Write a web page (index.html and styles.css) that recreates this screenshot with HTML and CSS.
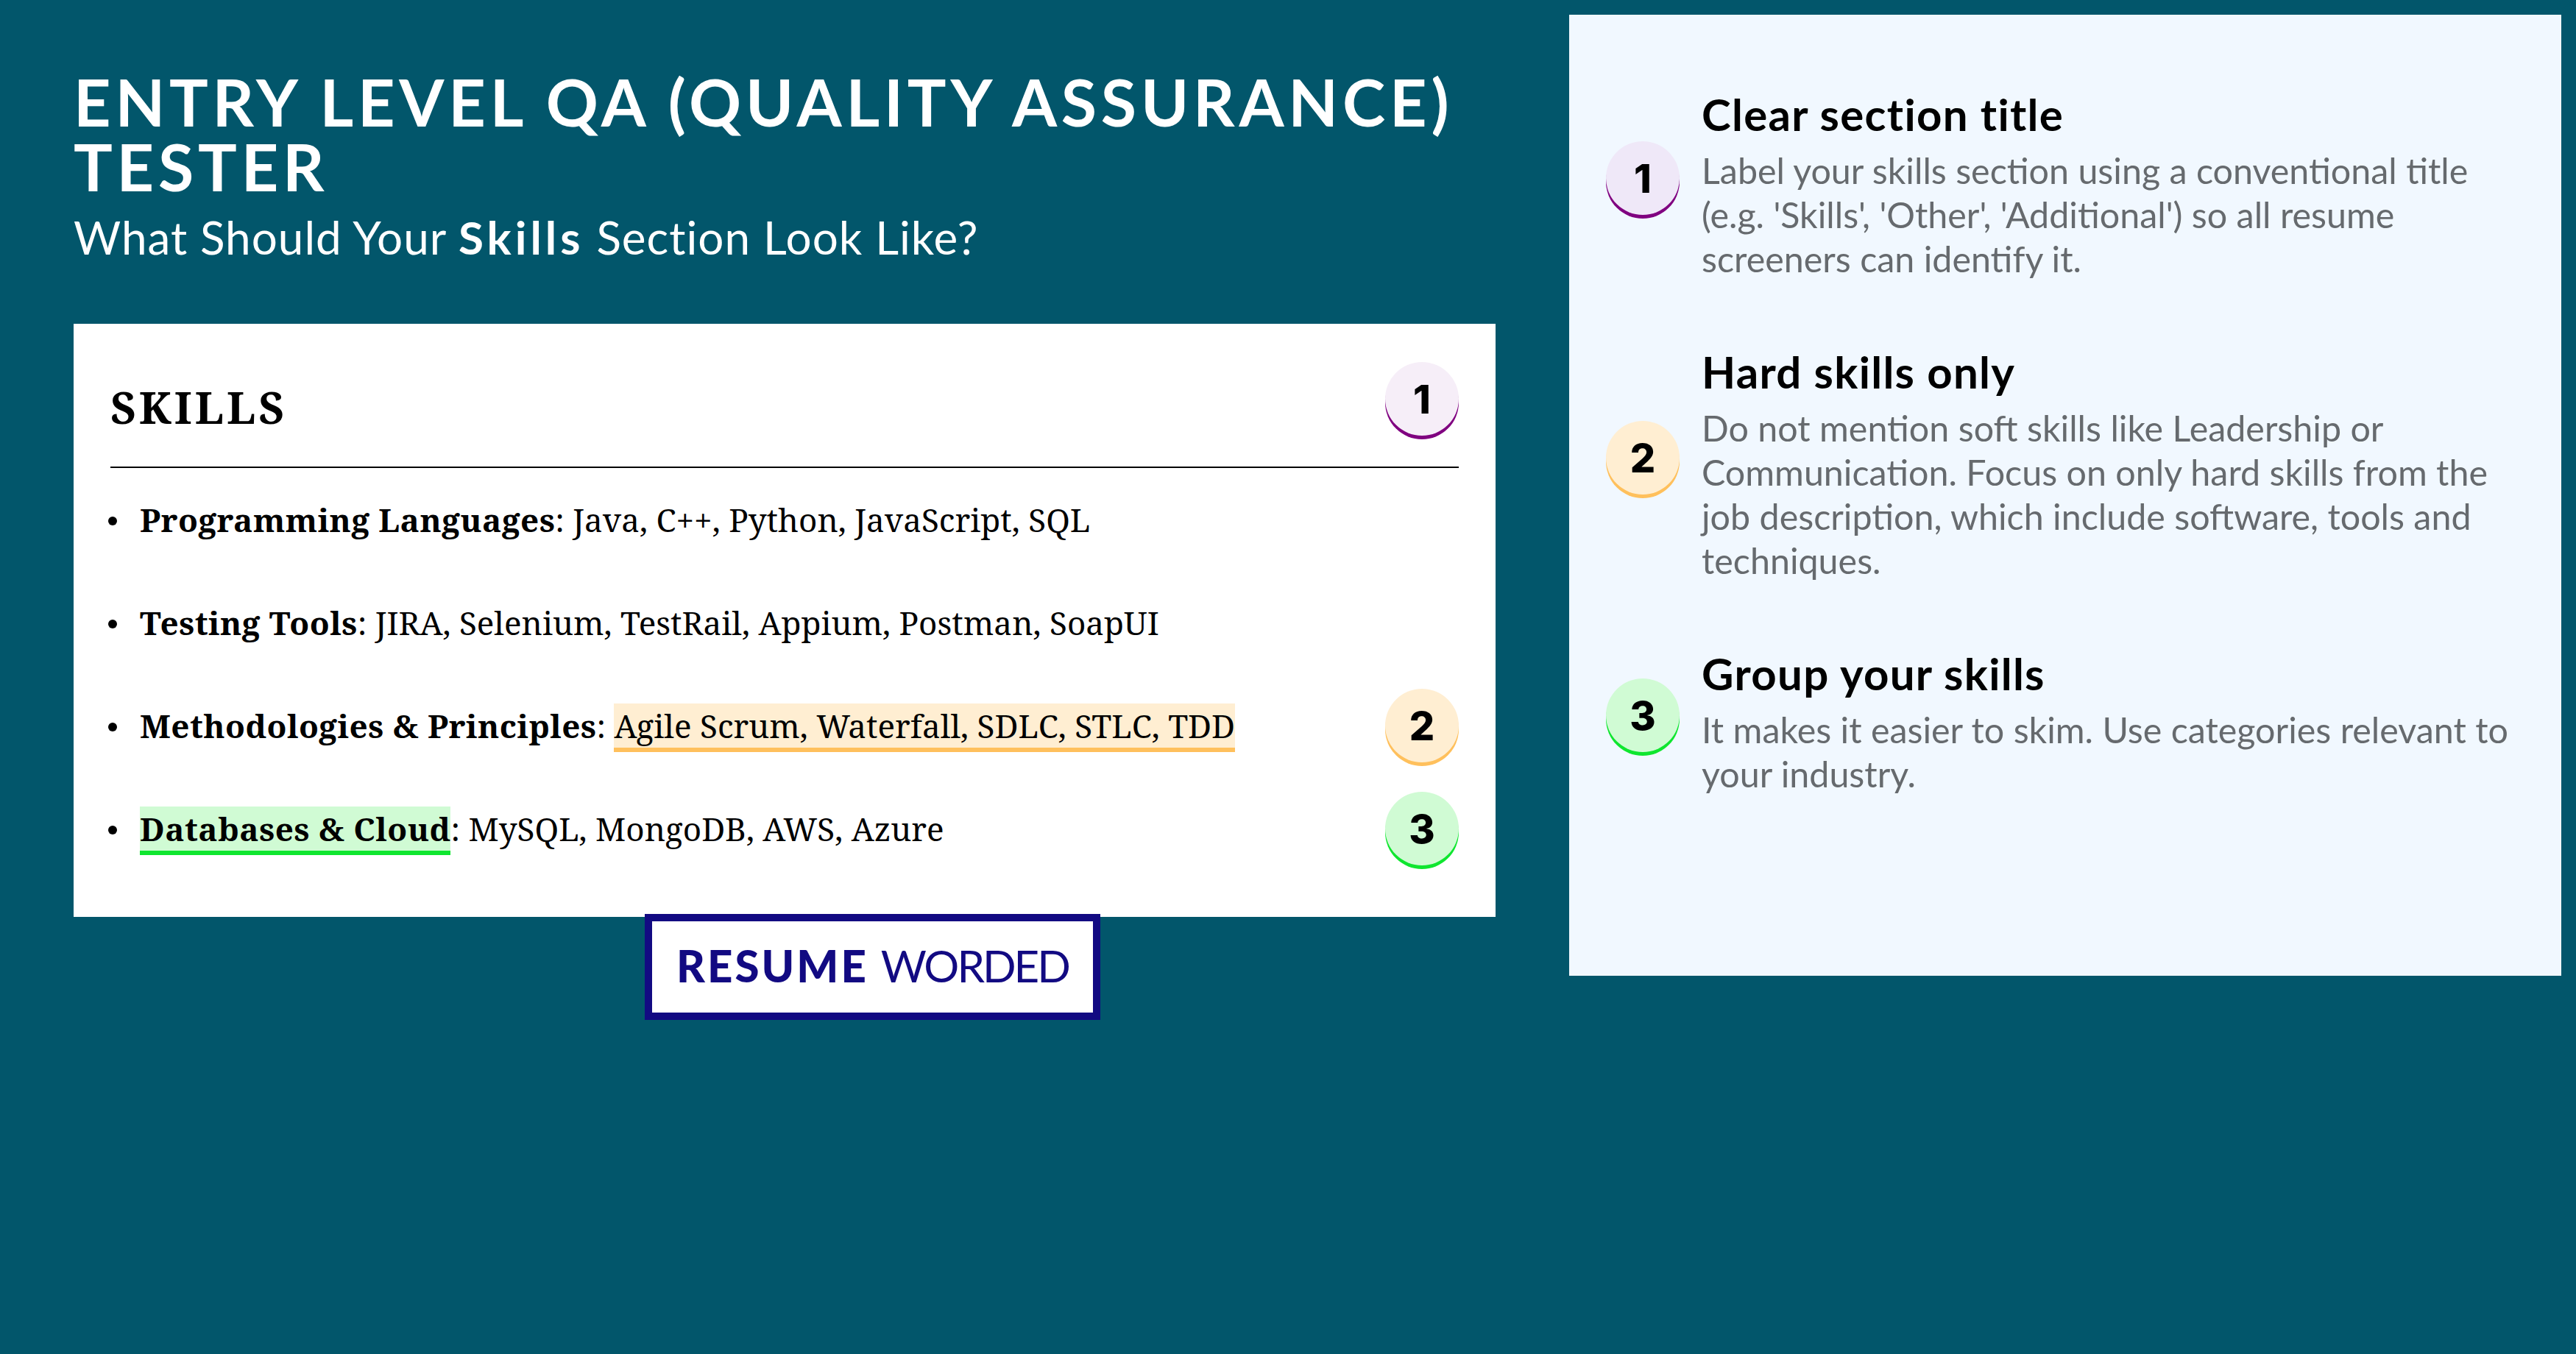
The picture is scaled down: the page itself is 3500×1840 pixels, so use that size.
FILE: index.html
```html
<!DOCTYPE html>
<html lang="en">
<head>
<meta charset="utf-8">
<title>Entry Level QA Tester Skills Section</title>
<link rel="stylesheet" href="styles.css">
</head>
<body>
<main class="page">
  <section class="left">
    <h1 class="title">ENTRY LEVEL QA (QUALITY ASSURANCE) TESTER</h1>
    <p class="subtitle">What Should Your <b>Skills</b> Section Look Like?</p>
    <div class="card">
      <header class="card-head">
        <h2 class="card-title">SKILLS</h2>
        <span class="badge badge-1">1</span>
      </header>
      <ul class="skills">
        <li class="skill"><span class="skill-text"><b>Programming Languages</b>: Java, C++, Python, JavaScript, SQL</span></li>
        <li class="skill"><span class="skill-text"><b>Testing Tools</b>: JIRA, Selenium, TestRail, Appium, Postman, SoapUI</span></li>
        <li class="skill"><span class="skill-text"><b>Methodologies &amp; Principles</b>: <mark class="hl hl-2">Agile Scrum, Waterfall, SDLC, STLC, TDD</mark></span><span class="badge badge-2">2</span></li>
        <li class="skill"><span class="skill-text"><b class="hl hl-3">Databases &amp; Cloud</b>: MySQL, MongoDB, AWS, Azure</span><span class="badge badge-3">3</span></li>
      </ul>
    </div>
    <div class="logo"><b>RESUME</b> <span>WORDED</span></div>
  </section>
  <aside class="panel">
    <article class="tip tip-1">
      <span class="badge badge-1 soft">1</span>
      <div class="tip-body">
        <h3 class="tip-title">Clear section title</h3>
        <p class="tip-text">Label your skills section using a conventional title (e.g. 'Skills', 'Other', 'Additional') so all resume screeners can identify it.</p>
      </div>
    </article>
    <article class="tip tip-2">
      <span class="badge badge-2">2</span>
      <div class="tip-body">
        <h3 class="tip-title">Hard skills only</h3>
        <p class="tip-text">Do not mention soft skills like Leadership or Communication. Focus on only hard skills from the job description, which include software, tools and techniques.</p>
      </div>
    </article>
    <article class="tip tip-3">
      <span class="badge badge-3">3</span>
      <div class="tip-body">
        <h3 class="tip-title">Group your skills</h3>
        <p class="tip-text">It makes it easier to skim. Use categories relevant to your industry.</p>
      </div>
    </article>
  </aside>
</main>
</body>
</html>
```
FILE: styles.css
```css
* { box-sizing: border-box; }
html, body { margin: 0; padding: 0; }
body {
  width: 3500px;
  height: 1840px;
  background: #02566b;
  font-family: "Lato", "Noto Sans", sans-serif;
  overflow: hidden;
}
.page {
  display: flex;
  align-items: flex-start;
  gap: 100px;
  padding-left: 100px;
}
.left { width: 1932px; flex: none; padding-top: 94px; }
.title {
  margin: 0;
  font-size: 88px;
  line-height: 88px;
  font-weight: 700;
  letter-spacing: 5.8px;
  color: #fff;
}
.subtitle {
  margin: 14px 0 0;
  font-size: 62px;
  line-height: 76px;
  letter-spacing: 1px;
  color: #fff;
}
.subtitle b { letter-spacing: 5px; }
.card {
  margin-top: 80px;
  height: 806px;
  padding: 0 50px;
  background: #fff;
  font-family: "Noto Serif", "DejaVu Serif", "Liberation Serif", serif;
  color: #000;
}
.card-head {
  height: 196px;
  display: flex;
  align-items: flex-start;
  justify-content: space-between;
  padding-top: 52px;
  border-bottom: 2px solid #000;
}
.card-title {
  margin: 26px 0 0;
  font-size: 60px;
  line-height: 70px;
  font-weight: 700;
  letter-spacing: 4px;
}
.skills { margin: 0; padding: 0; list-style: none; }
.skill {
  position: relative;
  height: 140px;
  display: flex;
  align-items: center;
  justify-content: space-between;
  padding-left: 40px;
  font-size: 44px;
}
.skill b { letter-spacing: 0.45px; }
.skill::before {
  content: "";
  position: absolute;
  left: -3px;
  top: 66px;
  width: 12px;
  height: 12px;
  border-radius: 50%;
  background: #000;
}
.hl { color: inherit; border-bottom: 6px solid; }
.hl-2 { background: #ffeed2; border-color: #ffc05c; }
.hl-3 { background: #d0fbd4; border-color: #0fe62f; }
.badge {
  flex: none;
  width: 100px;
  height: 100px;
  border-radius: 50%;
  display: flex;
  align-items: center;
  justify-content: center;
  font-family: "Inter", "Noto Sans", sans-serif;
  font-size: 54px;
  font-weight: 800;
  color: #000;
}
.badge-1 { background: #f6eef8; box-shadow: 0 5px 0 #800080; }
.badge-1.soft { background: #efe8f8; }
.badge-2 { background: #ffeed2; box-shadow: 0 5px 0 #ffc05c; }
.badge-3 { background: #d0fbd4; box-shadow: 0 5px 0 #0fe62f; }
.logo {
  position: relative;
  width: 619px;
  height: 144px;
  margin: -4px 0 0 776px;
  padding-bottom: 4px;
  display: flex;
  align-items: center;
  justify-content: center;
  gap: 17px;
  background: #fff;
  border: 10px solid #120a82;
  color: #120a82;
  font-size: 60px;
}
.logo b { font-weight: 900; letter-spacing: 3px; }
.logo span { letter-spacing: -3px; }
.panel {
  flex: none;
  width: 1348px;
  height: 1306px;
  margin-top: 20px;
  padding: 100px 60px 0 50px;
  background: #f1f8ff;
  display: flex;
  flex-direction: column;
  gap: 89px;
}
.tip { display: flex; align-items: flex-start; gap: 30px; }
.tip-1 .badge { margin-top: 72px; }
.tip-2 .badge { margin-top: 102px; }
.tip-3 .badge { margin-top: 42px; }
.tip-title {
  margin: 0 0 11px;
  font-size: 60px;
  line-height: 70px;
  font-weight: 700;
  letter-spacing: 1.3px;
  color: #000;
}
.tip-text {
  margin: 0;
  font-size: 48.4px;
  line-height: 60px;
  color: #666a6e;
}
```
